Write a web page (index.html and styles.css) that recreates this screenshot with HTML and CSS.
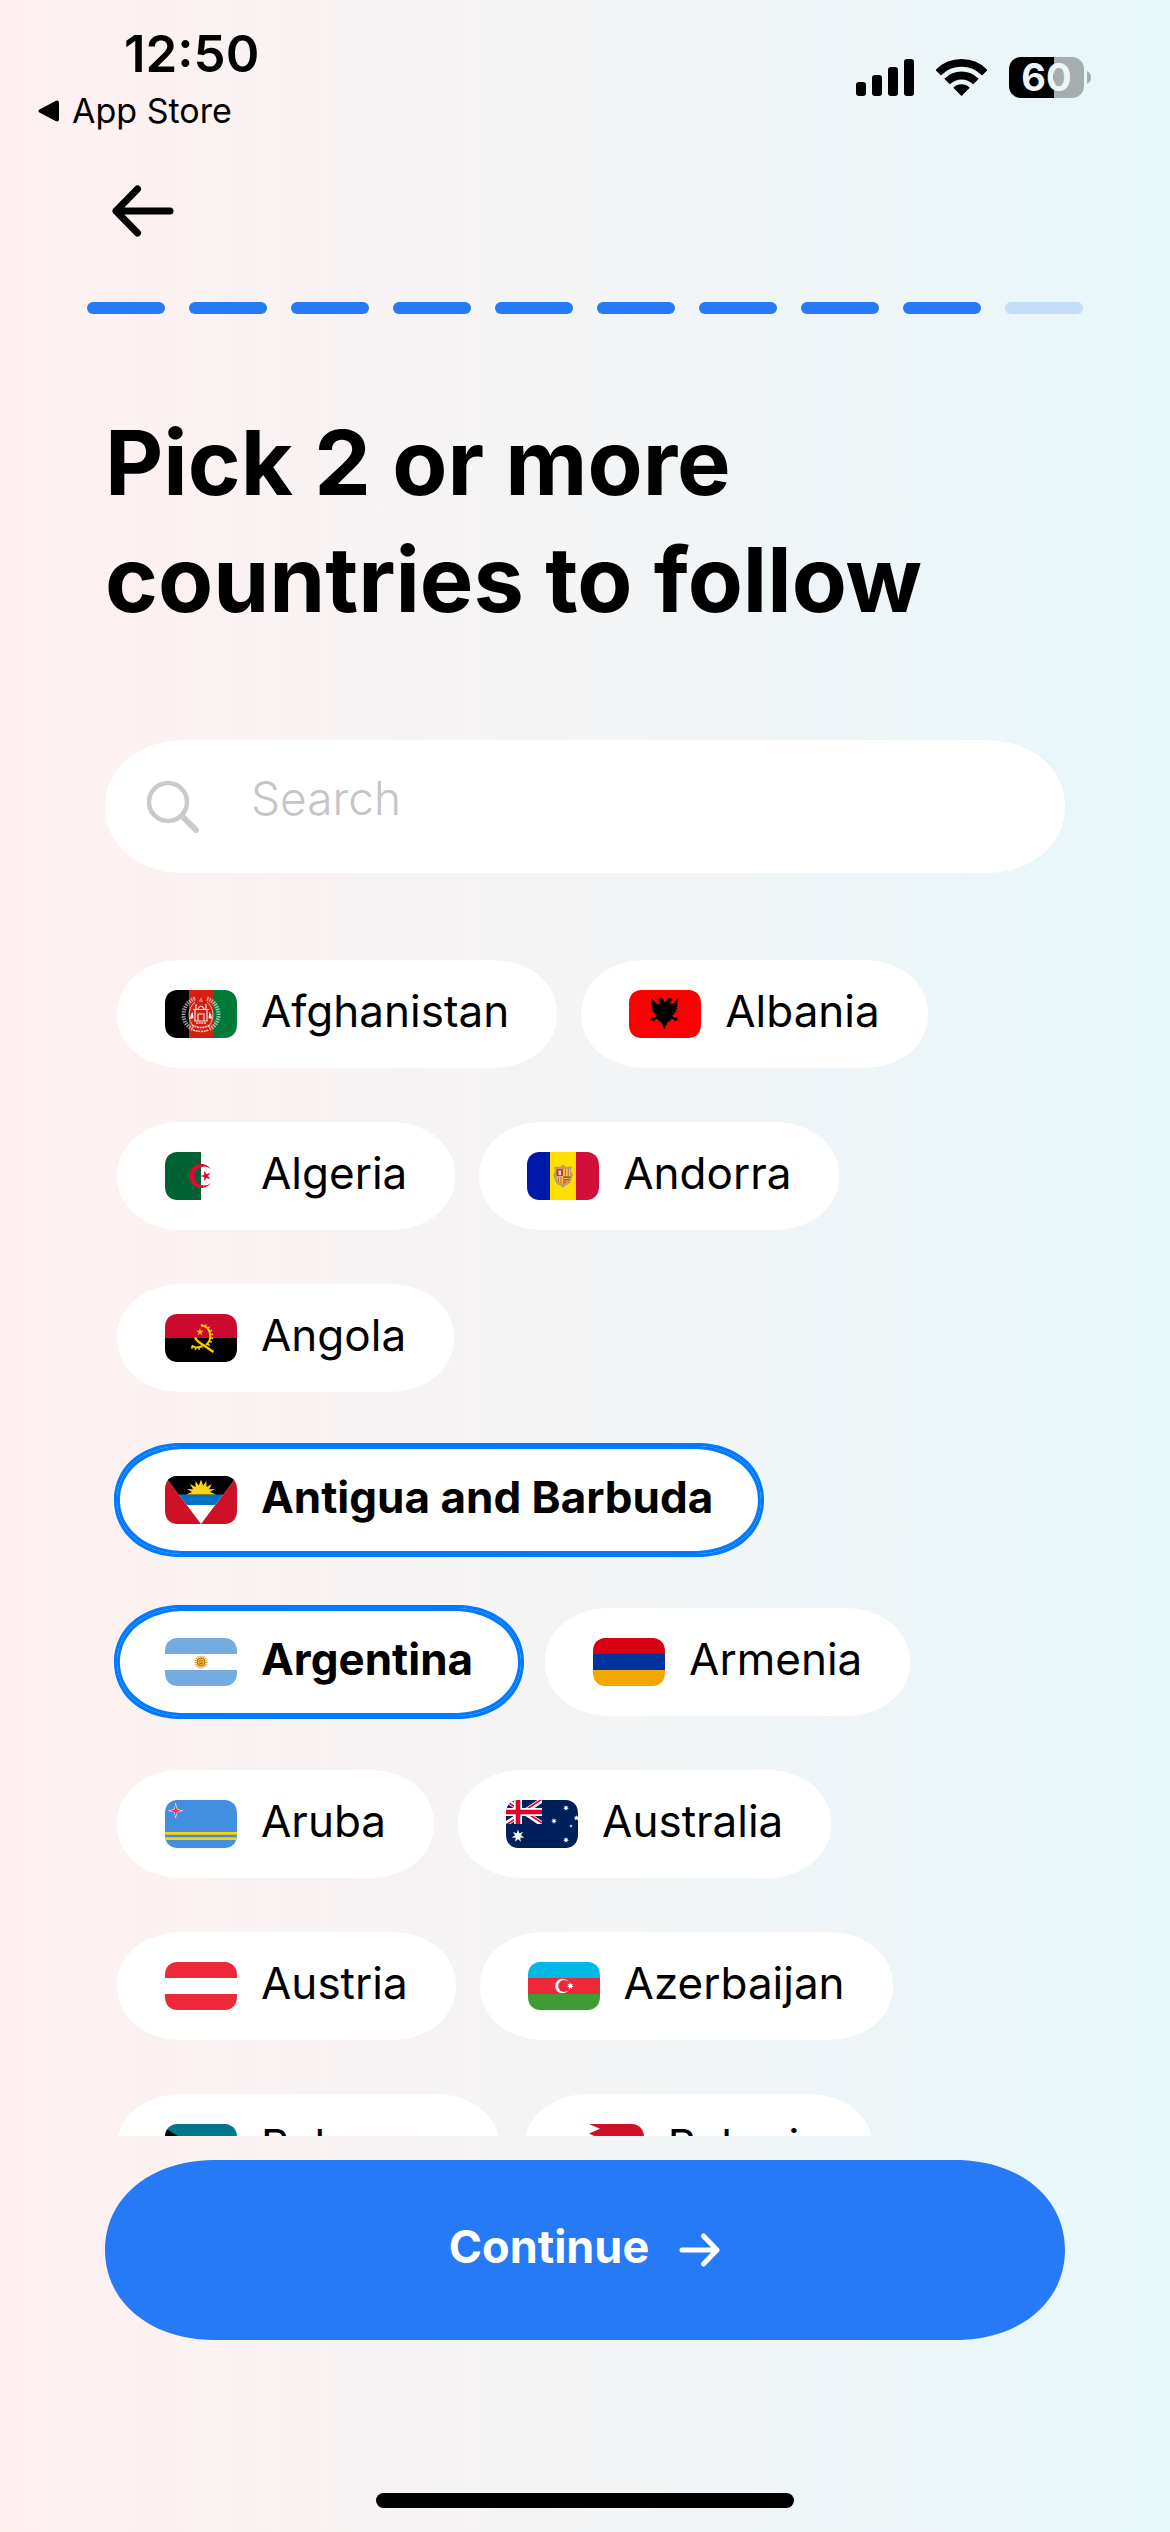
FILE: index.html
```html
<!DOCTYPE html>
<html lang="en">
<head>
<meta charset="utf-8">
<meta name="viewport" content="width=device-width, initial-scale=1">
<title>Pick countries to follow</title>
<link rel="stylesheet" href="styles.css">
</head>
<body>
<svg class="defs" aria-hidden="true">
  <defs>
    <path id="star5" d="M0-1 .225-.309 .951-.309 .363 .118 .588 .809 0 .382-.588 .809-.363 .118-.951-.309-.225-.309Z"/>
    <path id="star7" d="M0-1 .195-.405 .782-.623 .438-.1 .975 .223 .351 .28 .434 .901 0 .45-.434 .901-.351 .28-.975 .223-.438-.1-.782-.623-.195-.405Z"/>
    <path id="star4" d="M0-1 .2-.2 1 0 .2 .2 0 1-.2 .2-1 0-.2-.2Z"/>
    <clipPath id="wifi-wedge"><path d="M25.5 37-11.5 0h74Z"/></clipPath>
    <clipPath id="canton"><path d="M0 0h36v24H0Z"/></clipPath>
  </defs>
</svg>

<div class="screen">
  <header class="status">
    <div class="status__left">
      <time class="status__time">12:50</time>
      <a class="status__return" href="#">
        <svg width="22" height="22" viewBox="0 0 22 22" aria-hidden="true"><path d="M1.500 9.500 17.500.900Q21-.500 21 3v16Q21 22.500 17.500 21.100L1.500 12.500Q-.800 11 1.500 9.500Z"/></svg>
        App Store
      </a>
    </div>
    <div class="status__right">
      <svg width="58" height="37" viewBox="0 0 58 37" aria-label="Signal" role="img">
        <rect x="0" y="23" width="10" height="14" rx="3"/><rect x="16" y="16" width="10" height="21" rx="3"/><rect x="32" y="8" width="10" height="29" rx="3"/><rect x="48" y="0" width="10" height="37" rx="3"/>
      </svg>
      <svg width="51" height="37" viewBox="0 0 51 37" aria-label="Wi-Fi" role="img">
        <g clip-path="url(#wifi-wedge)">
          <circle cx="25.500" cy="36.500" r="32.600" fill="none" stroke="#000" stroke-width="7.800"/>
          <circle cx="25.500" cy="36.500" r="20" fill="none" stroke="#000" stroke-width="7.800"/>
          <circle cx="25.500" cy="36.500" r="11.200"/>
        </g>
      </svg>
      <div class="battery">
        <span class="battery__level">60</span>
        <svg width="4" height="13" viewBox="0 0 4 13" aria-hidden="true"><path d="M0 0Q4 2 4 6.500T0 13Z" fill="#a5adae"/></svg>
      </div>
    </div>
  </header>

  <button class="back" type="button" aria-label="Back">
    <svg width="62" height="52" viewBox="0 0 62 52" fill="none" stroke="#000" stroke-width="7" stroke-linecap="round" stroke-linejoin="round" aria-hidden="true"><path d="M58 26H4M25.500 4 4 26l21.500 22"/></svg>
  </button>

  <div class="progress" role="img" aria-label="Step 9 of 10">
    <i class="progress__step"></i><i class="progress__step"></i><i class="progress__step"></i><i class="progress__step"></i><i class="progress__step"></i><i class="progress__step"></i><i class="progress__step"></i><i class="progress__step"></i><i class="progress__step"></i><i class="progress__step progress__step--todo"></i>
  </div>

  <main class="content">
    <h1 class="title">Pick 2 or more countries to follow</h1>

    <label class="search">
      <svg width="54" height="54" viewBox="0 0 54 54" fill="none" stroke="#cacaca" stroke-linecap="round" aria-hidden="true"><circle cx="21" cy="22" r="19" stroke-width="4.500"/><path d="m35 36 14 14" stroke-width="6"/></svg>
      <input class="search__input" type="search" placeholder="Search" aria-label="Search">
    </label>

    <div class="countries">
      <label class="chip"><input class="chip__box" type="checkbox">
        <svg class="flag" viewBox="0 0 72 48" aria-hidden="true"><path d="M0 0h24v48H0z"/><path fill="#d32011" d="M24 0h24v48H24z"/><path fill="#007a36" d="M48 0h24v48H48z"/>
          <g fill="none" stroke="#fff"><path d="M30 8.500C15 14 15 34 28 39M42 8.500C57 14 57 34 44 39" stroke-width="4" stroke-dasharray="1.500 1" opacity=".6"/><path d="M30 12a17 17 0 0 0-1 25M42 12a17 17 0 0 1 1 25" stroke-width="1" opacity=".7"/><path d="M28 19.500h16M30 20v11h12V20M33 31v-7h6v7M31 19v-5M41 19v-5M33 19q3-6 6 0" stroke-width="1.200" opacity=".85"/><path d="M27 35q9 5 18 0M28 40q8 3 16 0M31 33h10" stroke-width="1.600" stroke-dasharray="2 .7" opacity=".8"/><path d="M34 11h4M36 8v2" stroke-width="1" opacity=".7"/></g>
          <path fill="#fff" d="M25.500 29q-1-4 2-7l1 6zM46.500 29q1-4-2-7l-1 6z"/></svg>
        <span class="chip__name">Afghanistan</span></label>
      <label class="chip"><input class="chip__box" type="checkbox">
        <svg class="flag" viewBox="0 0 72 48" aria-hidden="true"><path fill="red" d="M0 0h72v48H0z"/>
          <path d="M36 12.500q-1-3-3.500-4.500l-4.500 1 2 1-1 1.500 2.500.5q-.5 2-3 1.800Q26 13 25.500 11L22 8l1 3.500-1.500 0 2 2-2 .3 2.300 1.700-2 .6 2.300 1.600-2 .9 2.500 1.200-1.600 1.400 2.600.6-1.200 1.600 2.500.2-.6 1.800 2.200-.6q-1.500 2.500-4 3l-2.500-.6 1 1.700-1.600 1.600 2.600-.2.800 1.500 1.400-2.200 3-.8-.4 2.300 1.700-1 .2 2.500 1.700-1.200q.3 3 1.600 4.100l1.500 4 1.500-4q1.300-1.100 1.600-4.100l1.700 1.200.2-2.500 1.700 1-.4-2.300 3 .8 1.400 2.200.8-1.500 2.600.2-1.600-1.600 1-1.700-2.500.6q-2.500-.5-4-3l2.200.6-.6-1.800 2.500-.2-1.200-1.600 2.600-.6-1.600-1.400 2.500-1.200-2-.9 2.300-1.600-2-.6 2.300-1.700-2-.3 2-2-1.500 0L50 8l-3.500 3q-.5 2-3 2.800-2.500.2-3-1.800l2.500-.5-1-1.500 2-1-4.500-1Q37 9.500 36 12.500Z"/></svg>
        <span class="chip__name">Albania</span></label>
      <label class="chip"><input class="chip__box" type="checkbox">
        <svg class="flag" viewBox="0 0 72 48" aria-hidden="true"><path fill="#fff" d="M0 0h72v48H0z"/><path fill="#006233" d="M0 0h36v48H0z"/><path fill="#d21034" d="M46 17.300A12 12 0 1 0 46 30.700 9.600 9.600 0 1 1 46 17.300Z"/><use href="#star5" fill="#d21034" transform="translate(41 24) rotate(-90) scale(5.500)"/></svg>
        <span class="chip__name">Algeria</span></label>
      <label class="chip"><input class="chip__box" type="checkbox">
        <svg class="flag" viewBox="0 0 72 48" aria-hidden="true"><path fill="#0018a8" d="M0 0h24v48H0z"/><path fill="#fedf00" d="M23 0h26v48H23z"/><path fill="#d0103a" d="M49 0h23v48H49z"/>
          <path fill="#b9a06c" d="M27 15q4-1 6 0l3-2.500 3 2.500q2-1 6 0l-1 4 2 4-2 5q-1 5-5 5l-3 3-3-3q-4 0-5-5l-2-5 2-4Z"/><path fill="#d8322e" d="M29.500 17H36v7h-6.500zM36.500 24.500H43q0 5-6.500 7z"/><path fill="#f6d24a" d="M36.500 17H43v7h-6.500zM29.500 24.500H36v7q-6.500-2-6.500-7z"/><path stroke="#d8702e" stroke-width="1.300" d="M38.500 17v7M41.300 17v7M31.500 25v5M34 25v6"/><path fill="#f3d9d0" d="M31.500 18.500h2.500V23h-2.500z"/><path stroke="#f6d24a" stroke-width="1" d="M37 26.500h5M37 29h4"/></svg>
        <span class="chip__name">Andorra</span></label>
      <label class="chip"><input class="chip__box" type="checkbox">
        <svg class="flag" viewBox="0 0 72 48" aria-hidden="true"><path fill="#cc092f" d="M0 0h72v24H0z"/><path d="M0 24h72v24H0z"/>
          <g fill="none" stroke="#ffcb00"><path d="M37 11.500C46 13 48 25 41 31" stroke-width="2"/><path d="M36 11.500C48 10.500 50 26 42 32" stroke-width="3" stroke-dasharray="1.500 2.200"/><path d="m30 23.500q2 4 7.500 7L48.500 38" stroke-width="2.400"/><path d="M26.500 31.500Q31 35 37.500 32" stroke-width="2"/><path d="M26.500 33Q32 36 37 33" stroke-width="3" stroke-dasharray="1.500 2"/></g><use href="#star5" fill="#ffcb00" transform="translate(35 18) scale(4)"/></svg>
        <span class="chip__name">Angola</span></label>
      <label class="chip"><input class="chip__box" type="checkbox" checked>
        <svg class="flag" viewBox="0 0 72 48" aria-hidden="true"><path fill="#ce1126" d="M0 0h72v48H0z"/><path fill="#fff" d="M0 0h72L36 48z"/><path fill="#0072c6" d="M0 0h72L50.200 29H21.800z"/><path d="M0 0h72L58.100 18.500H13.900z"/><path fill="#fcd116" d="m21 18.500 6-2.500-5-3 6 .300L25 8l5.500 3L30.500 5l3.300 4.500L36 3.500l2.200 6L41.500 5v6L47 8l-3 5.300 6-.300-5 3 6 2.500z"/></svg>
        <span class="chip__name">Antigua and Barbuda</span></label>
      <label class="chip"><input class="chip__box" type="checkbox" checked>
        <svg class="flag" viewBox="0 0 72 48" aria-hidden="true"><path fill="#74acdf" d="M0 0h72v48H0z"/><path fill="#fff" d="M0 16h72v16H0z"/><circle cx="36" cy="24" r="5.300" fill="none" stroke="#dfa04a" stroke-width="2.600" stroke-dasharray="1.100 .800"/><circle cx="36" cy="24" r="4" fill="#f0ac1b" stroke="#b8741c"/><path stroke="#a86a1a" d="M34 23h1.500M36.500 23H38M34.500 25.500h3"/></svg>
        <span class="chip__name">Argentina</span></label>
      <label class="chip"><input class="chip__box" type="checkbox">
        <svg class="flag" viewBox="0 0 72 48" aria-hidden="true"><path fill="#d90012" d="M0 0h72v16H0z"/><path fill="#0033a0" d="M0 16h72v16H0z"/><path fill="#f2a800" d="M0 32h72v16H0z"/></svg>
        <span class="chip__name">Armenia</span></label>
      <label class="chip"><input class="chip__box" type="checkbox">
        <svg class="flag" viewBox="0 0 72 48" aria-hidden="true"><path fill="#418fde" d="M0 0h72v48H0z"/><path fill="#ffd100" d="M0 32h72v2.700H0zM0 37.300h72V40H0z"/><use href="#star4" fill="#fff" transform="translate(10.700 10.700) scale(8)"/><use href="#star4" fill="#f5333f" transform="translate(10.700 10.700) scale(6)"/></svg>
        <span class="chip__name">Aruba</span></label>
      <label class="chip"><input class="chip__box" type="checkbox">
        <svg class="flag" viewBox="0 0 72 48" aria-hidden="true"><path fill="#00205b" d="M0 0h72v48H0z"/><g clip-path="url(#canton)"><path stroke="#fff" stroke-width="5" d="m0 0 36 24M36 0 0 24"/><path stroke="#e4002b" stroke-width="1.600" d="m0 1 18 12M18 11l18 12M36-1 18 11M18 13 0 25"/><path stroke="#fff" stroke-width="8" d="M12 0v24M0 12h36"/><path stroke="#e4002b" stroke-width="4.600" d="M12 0v24M0 12h36"/></g>
          <g fill="#fff"><use href="#star7" transform="translate(12 36) scale(6.500)"/><use href="#star7" transform="translate(60 8) scale(3)"/><use href="#star7" transform="translate(48 21) scale(3)"/><use href="#star7" transform="translate(70.500 18) scale(3)"/><use href="#star5" transform="translate(65 26) scale(1.800)"/><use href="#star7" transform="translate(60 40) scale(3)"/></g></svg>
        <span class="chip__name">Australia</span></label>
      <label class="chip"><input class="chip__box" type="checkbox">
        <svg class="flag" viewBox="0 0 72 48" aria-hidden="true"><path fill="#ed2939" d="M0 0h72v48H0z"/><path fill="#fff" d="M0 16h72v16H0z"/></svg>
        <span class="chip__name">Austria</span></label>
      <label class="chip"><input class="chip__box" type="checkbox">
        <svg class="flag" viewBox="0 0 72 48" aria-hidden="true"><path fill="#00b9e4" d="M0 0h72v16H0z"/><path fill="#ed2939" d="M0 16h72v16H0z"/><path fill="#3f9c35" d="M0 32h72v16H0z"/><circle cx="34.500" cy="24" r="7.300" fill="#fff"/><circle cx="36.200" cy="24" r="6" fill="#ed2939"/><use href="#star7" fill="#fff" transform="translate(42.300 24) scale(3.600)"/></svg>
        <span class="chip__name">Azerbaijan</span></label>
      <label class="chip"><input class="chip__box" type="checkbox">
        <svg class="flag" viewBox="0 0 72 48" aria-hidden="true"><path fill="#00778b" d="M0 0h72v48H0z"/><path fill="#ffc72c" d="M0 16h72v16H0z"/><path d="m0 4 32 20L0 44z"/></svg>
        <span class="chip__name">Bahamas</span></label>
      <label class="chip"><input class="chip__box" type="checkbox">
        <svg class="flag" viewBox="0 0 72 48" aria-hidden="true"><path fill="#fff" d="M0 0h72v48H0z"/><path fill="#ce1126" d="M72 0H17l11 4.800L17 9.600l11 4.800-11 4.800L28 24l-11 4.800 11 4.800-11 4.800 11 4.800L17 48h55z"/></svg>
        <span class="chip__name">Bahrain</span></label>
    </div>
  </main>

  <footer class="footer">
    <button class="continue" type="button">
      <span class="continue__text">Continue</span>
      <svg width="42" height="42" viewBox="0 0 42 42" fill="none" stroke="#fff" stroke-width="5" stroke-linecap="round" stroke-linejoin="round" aria-hidden="true"><path d="M3 21h35M24.500 7 38 21 24.500 35"/></svg>
    </button>
    <div class="home-bar"></div>
  </footer>
</div>
</body>
</html>
```
FILE: styles.css
```css
* {
  box-sizing: border-box;
}

body {
  margin: 0;
  font-family: Inter, "Liberation Sans", sans-serif;
  color: #000;
}

button,
input {
  font: inherit;
  color: inherit;
}

svg {
  display: block;
  flex: none;
}

.defs {
  position: absolute;
  width: 0;
  height: 0;
}

.screen {
  display: flex;
  flex-direction: column;
  height: 100vh;
  background: linear-gradient(to right, #fff0f0, #f3f4f5 50%, #edf5f8 78%, #e6f8fa);
}

/* Status bar */
.status {
  display: flex;
  justify-content: space-between;
  align-items: flex-start;
  padding: 24px 79px 0 38px;
}

.status__left {
  display: flex;
  flex-direction: column;
  gap: 6px;
}

.status__time {
  padding-left: 86px;
  font-size: 51px;
  line-height: 60px;
  font-weight: 600;
}

.status__return {
  display: flex;
  align-items: center;
  gap: 12px;
  font-size: 34px;
  line-height: 42px;
  color: inherit;
  text-decoration: none;
}

.status__right {
  display: flex;
  align-items: center;
  gap: 22px;
  padding-top: 33px;
}

.battery {
  display: flex;
  align-items: center;
  gap: 3px;
}

.battery__level {
  width: 75px;
  border-radius: 12px;
  background: linear-gradient(to right, #000 60%, #a5adae 60%);
  color: #ecf6f9;
  font-size: 38px;
  line-height: 41px;
  font-weight: 700;
  text-align: center;
}

/* Navigation and progress */
.back {
  align-self: flex-start;
  margin: 53px 0 0 112px;
  padding: 0;
  border: 0;
  background: none;
}

.progress {
  display: flex;
  gap: 24px;
  margin: 65px 87px 0;
}

.progress__step {
  flex: 1;
  height: 12px;
  border-radius: 6px;
  background: #277af6;
}

.progress__step--todo {
  background: #c4ddf8;
}

/* Content */
.content {
  flex: 1;
  min-height: 0;
  display: flex;
  flex-direction: column;
  padding: 90px 105px 0;
}

.title {
  margin: 0 0 102px;
  max-width: 900px;
  font-size: 90px;
  line-height: 117px;
  font-weight: 700;
}

.search {
  flex: none;
  display: flex;
  align-items: center;
  gap: 50px;
  height: 133px;
  padding: 0 42px;
  border-radius: 81px / 66px;
  corner-shape: superellipse(1.07);
  background: #fff;
}

.search__input {
  flex: 1;
  min-width: 0;
  padding: 0 0 18px;
  border: 0;
  outline: 0;
  background: none;
  appearance: none;
  font-size: 46px;
  line-height: 60px;
  font-weight: 300;
}

.search__input::placeholder {
  color: #c5c5c7;
  opacity: 1;
}

.countries {
  flex: 1;
  min-height: 0;
  display: flex;
  flex-wrap: wrap;
  align-content: flex-start;
  gap: 54px 24px;
  margin-top: 57px;
  padding: 30px 12px;
  overflow-y: auto;
  scrollbar-width: none;
}

.chip {
  position: relative;
  display: flex;
  align-items: center;
  gap: 24px;
  height: 108px;
  padding: 0 48px;
  border-radius: 66px / 54px;
  corner-shape: superellipse(1.07);
  background: #fff;
}

.chip__box {
  position: absolute;
  margin: 0;
  opacity: 0;
}

.chip__name {
  padding-bottom: 6px;
  font-size: 44px;
  line-height: 54px;
  font-weight: 400;
}

.chip:has(:checked) {
  box-shadow: 0 0 0 3px #007aff, inset 0 0 0 3px #007aff;
}

.chip:has(:checked) .chip__name {
  font-weight: 700;
}

.flag {
  width: 72px;
  height: 48px;
  border-radius: 14px;
  corner-shape: superellipse(1.25);
  overflow: hidden;
}

/* Footer */
.footer {
  display: flex;
  flex-direction: column;
  align-items: center;
  gap: 153px;
  padding: 24px 105px;
}

.continue {
  display: flex;
  align-items: center;
  justify-content: center;
  gap: 30px;
  width: 100%;
  height: 180px;
  padding: 0;
  border: 0;
  border-radius: 110px / 90px;
  corner-shape: superellipse(1.07);
  background: #277af6;
  color: #fff;
}

.continue__text {
  padding-bottom: 6px;
  font-size: 45px;
  line-height: 60px;
  font-weight: 700;
}

.home-bar {
  width: 418px;
  height: 15px;
  border-radius: 8px;
  background: #000;
}
```
